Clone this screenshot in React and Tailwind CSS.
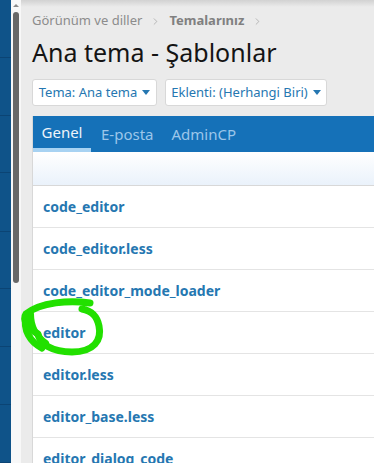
import { ChevronRight } from "lucide-react";

const templates = [
  "code_editor",
  "code_editor.less",
  "code_editor_mode_loader",
  "editor",
  "editor.less",
  "editor_base.less",
  "editor_dialog_code",
];

function Caret() {
  return (
    <span className="ml-[5px] inline-block h-0 w-0 border-x-[4px] border-t-[5px] border-x-transparent border-t-[#2577b1] align-middle" />
  );
}

export default function App() {
  return (
    <div
      className="relative flex h-[463px] w-[374px] overflow-hidden bg-[#ebebeb]"
      style={{ fontFamily: '"Segoe UI", "Noto Sans", "Open Sans", sans-serif' }}
    >
      {/* left nav strip */}
      <div className="flex w-[11px] shrink-0 flex-col bg-[#0f5389]">
        {[65, 65, 64, 66, 65, 65, 65, 65].map((h, i) => (
          <div key={i} className="border-b border-[#0b4474]" style={{ height: h }} />
        ))}
      </div>

      {/* scrollbar gutter */}
      <div className="flex w-[10px] shrink-0 flex-col items-center bg-[#f8f8f8] pt-[4px]">
        <span className="h-0 w-0 border-x-[3px] border-b-[3px] border-x-transparent border-b-[#8a8a8a]" />
        <div className="mt-[5px] h-[271px] w-[6px] rounded-full bg-[#686868]" />
      </div>

      {/* main content */}
      <div className="relative flex min-w-0 flex-1 flex-col pl-[11px]">
        <div className="absolute inset-x-0 top-0 h-[7px] bg-gradient-to-b from-[#d2d2d2] to-[#ebebeb]" />

        {/* breadcrumb */}
        <div className="relative mt-[12px] flex h-[18px] items-center text-[13px] text-[#8c8c8c]">
          <span>Görünüm ve diller</span>
          <ChevronRight size={11} strokeWidth={1.4} className="mx-[8px] text-[#999]" />
          <span className="font-bold text-[#808080]">Temalarınız</span>
          <ChevronRight size={11} strokeWidth={1.4} className="mx-[8px] text-[#999]" />
        </div>

        {/* title */}
        <h1 className="mt-[5px] h-[34px] whitespace-nowrap text-[25px] leading-[34px] text-[#141414]">
          Ana tema - Şablonlar
        </h1>

        {/* filter buttons */}
        <div className="mt-[10px] flex gap-[8px]">
          <button className="flex h-[27px] w-[125px] items-center justify-center rounded-[3px] border border-[#d8d8d8] bg-white text-[13px] text-[#2577b1]">
            Tema: Ana tema
            <Caret />
          </button>
          <button className="flex h-[27px] w-[162px] items-center justify-center rounded-[3px] border border-[#d8d8d8] bg-white text-[13px] text-[#2577b1]">
            Eklenti: (Herhangi Biri)
            <Caret />
          </button>
        </div>

        {/* card */}
        <div className="mt-[10px] flex flex-1 flex-col border-l border-[#d8d8d8] bg-white">
          {/* tabs */}
          <div className="flex h-[36px] bg-[#1571b8] text-[15px]">
            <div className="flex w-[58px] flex-col">
              <span className="flex flex-1 items-center justify-center text-[#eef4fa]">Genel</span>
              <span className="h-[4px] bg-[#a7d2f2]" />
            </div>
            <span className="ml-[10px] flex items-center text-[#9cc6ea]">E-posta</span>
            <span className="ml-[18px] flex items-center text-[#9cc6ea]">AdminCP</span>
          </div>

          {/* list header */}
          <div className="h-[34px] border-b border-[#d8d8d8] bg-gradient-to-b from-white to-[#eaf2fb]" />

          {/* rows */}
          {templates.map((name) => (
            <div
              key={name}
              className="flex h-[42px] shrink-0 items-center border-b border-[#e4e4e4] px-[10px] text-[14px] font-bold text-[#2577b1]"
            >
              {name}
            </div>
          ))}
        </div>
      </div>

      {/* hand-drawn highlight */}
      <svg className="pointer-events-none absolute left-0 top-0" width="374" height="463">
        <path
          d="M 90 303 C 70 300 40 302 26 314 C 22 320 28 328 38 334 C 40 344 52 352 72 352 C 94 352 102 340 99 326 C 97 316 92 311 82 309"
          fill="none"
          stroke="#22e000"
          strokeWidth="7"
          strokeLinecap="round"
          strokeLinejoin="round"
        />
        <path d="M 26 316 C 23 330 30 342 42 348" fill="none" stroke="#22e000" strokeWidth="7" strokeLinecap="round" />
        <path d="M 31 314 C 31 326 36 336 46 343" fill="none" stroke="#22e000" strokeWidth="6" strokeLinecap="round" />
      </svg>
    </div>
  );
}
